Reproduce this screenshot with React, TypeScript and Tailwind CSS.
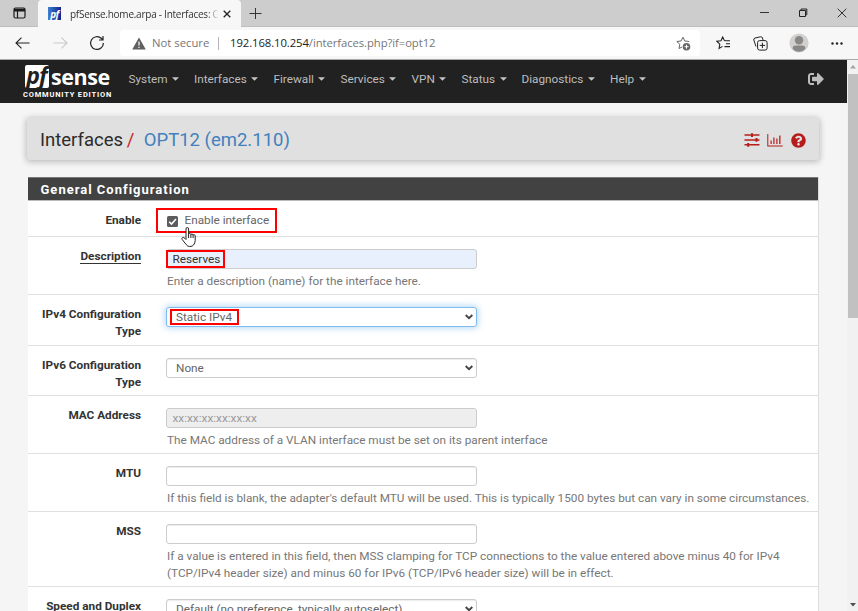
import type { ReactNode } from "react";
import { FaQuestionCircle, FaSignOutAlt } from "react-icons/fa";

const segoe = "font-['Open_Sans','Noto_Sans',sans-serif]";

function TabStrip() {
  return (
    <div className={`flex h-[27px] shrink-0 bg-[#cdcdcd] ${segoe}`}>
      <div className="flex w-[38px] items-center justify-center border-b border-[#bdbdbd]">
        <svg width="13" height="12" viewBox="0 0 13 12" fill="none" stroke="#1b1b1b" strokeWidth="1.2">
          <rect x="1" y="1" width="11" height="10" rx="1.5" />
          <path d="M1 2.5h11M1 3.6h11" strokeWidth="1.6" />
          <path d="M4.5 4v7" />
        </svg>
      </div>
      <div className="flex w-[203px] items-center rounded-t-[4px] bg-[#f7f7f7] pl-[10px]">
        <div className="flex size-[13px] items-center justify-center bg-linear-to-r from-[#3f7fd0] to-[#17208c] text-[10px] leading-none font-bold tracking-[-0.5px] text-white italic">
          pf
        </div>
        <div className="ml-[9px] w-[148px] overflow-hidden text-[10px] leading-[16px] tracking-[-0.250px] whitespace-nowrap text-[#333] [mask-image:linear-gradient(to_right,black_137px,transparent_149px)]">
          pfSense.home.arpa - Interfaces: O
        </div>
        <svg className="ml-[5px]" width="8" height="8" viewBox="0 0 8 8" stroke="#222" strokeWidth="1.3">
          <path d="M.7.7l6.6 6.6M7.3.7L.7 7.3" />
        </svg>
      </div>
      <div className="flex flex-1 items-center border-b border-[#bdbdbd] pl-[8px]">
        <svg width="13" height="13" viewBox="0 0 13 13" stroke="#333">
          <path d="M6.5 1v11M.5 6.5h12" />
        </svg>
        <svg className="ml-auto" width="10" height="10" viewBox="0 0 10 10" stroke="#333">
          <path d="M0 4.500h9" />
        </svg>
        <svg className="ml-[28px]" width="10" height="10" viewBox="0 0 10 10" fill="none" stroke="#222">
          <path d="M1.5 2.5h6v6h-6zM3 2.5V1h5.8v5.8H7.5" />
        </svg>
        <svg className="mr-[11px] ml-[29px]" width="10" height="10" viewBox="0 0 10 10" stroke="#333">
          <path d="M.7.7l8.6 8.6M9.3.7L.7 9.3" />
        </svg>
      </div>
    </div>
  );
}

function AddressBar() {
  return (
    <div className={`flex h-[33px] shrink-0 items-center border-b border-[#a9a9a9] bg-[#f7f7f7] ${segoe}`}>
      <svg className="ml-[15px]" width="15" height="12" viewBox="0 0 15 12" fill="none" stroke="#222" strokeWidth="1.1">
        <path d="M14.5 6H1M6.5.7L1 6l5.500 5.300" />
      </svg>
      <svg className="ml-[23px]" width="15" height="12" viewBox="0 0 15 12" fill="none" stroke="#c9c9c9" strokeWidth="1.1">
        <path d="M.5 6H14M8.500.7L14 6l-5.500 5.300" />
      </svg>
      <svg className="ml-[21px]" width="16" height="16" viewBox="0 0 16 16" fill="none" stroke="#222" strokeWidth="1.2">
        <path d="M14.400 8A6.400 6.400 0 1 1 12.300 3.300L14 4.900M14 1v4h-4" />
      </svg>
      <div className="ml-[15px] flex h-[26px] w-[580px] items-center rounded-[3px] bg-white text-[11.300px] leading-[18px] whitespace-nowrap text-[#767676]">
        <svg className="ml-[12px]" width="14" height="13" viewBox="0 0 14 13">
          <path d="M7 .4L13.800 12.600H.2z" fill="#5f5f5f" />
          <path d="M7 4.400v4.200M7 9.700v1.400" stroke="#fff" strokeWidth="1.2" />
        </svg>
        <span className="ml-[6px] w-[58px]">Not secure</span>
        <span className="ml-[8px] h-[13px] w-px bg-[#b5b5b5]" />
        <span className="ml-[11px] tracking-[-0.080px]">
          <span className="text-[#222]">192.168.10.254</span>/interfaces.php?if=opt12
        </span>
        <svg className="mr-[9px] ml-auto" width="15" height="15" viewBox="0 0 15 15" fill="none">
          <path
            d="M13.200 5.500L8.800 5 7 1.200 5 5 .8 5.500l3 2.800L3 12.500l3-1.500"
            stroke="#666"
          />
          <circle cx="10.500" cy="10.700" r="3.800" fill="#666" />
          <path d="M8.500 10.700h4M10.500 8.700v4" stroke="#fff" />
        </svg>
      </div>
      <svg className="ml-[16px]" width="15" height="14" viewBox="0 0 15 14" fill="none" stroke="#222" strokeWidth="1.1">
        <path d="M8.500 4.700L6.700 1 5 4.700l-4.200.5 3 3-.7 4.200 3.400-2M8.500 4.700H14M10 7.700h4M8.500 10.600H14" />
      </svg>
      <svg className="ml-[22px]" width="15" height="15" viewBox="0 0 15 15" fill="none" stroke="#222">
        <rect x="4.600" y="4.600" width="9.500" height="9.500" rx="2" />
        <path d="M9.400 6.700v5.400M6.700 9.400h5.400M3 10.500L.8 4Q.5 2.500 2 2L7.500.8Q9 .5 9.500 2L10 4" />
      </svg>
      <svg className="ml-[21px]" width="20" height="20" viewBox="0 0 20 20">
        <circle cx="10" cy="10" r="9.600" fill="#d2d0ce" />
        <circle cx="10" cy="7.200" r="4.200" fill="#8a8886" />
        <path d="M3.600 15.500Q3.600 12.500 7 12.500h6q3.400 0 3.400 3Q14 18.800 10 18.800T3.600 15.500" fill="#8a8886" />
      </svg>
      <svg className="ml-[22px]" width="12" height="3" viewBox="0 0 12 3" fill="#222">
        <circle cx="1.500" cy="1.500" r="1.200" />
        <circle cx="6" cy="1.500" r="1.200" />
        <circle cx="10.500" cy="1.500" r="1.200" />
      </svg>
    </div>
  );
}

function NavItem({ label, className }: { label: string; className: string }) {
  return (
    <div className={`flex shrink-0 items-center ${className}`}>
      <span>{label}</span>
      <svg className="ml-[4.500px]" width="7" height="4" viewBox="0 0 7 4" fill="#c4c4c4">
        <path d="M0 .3h7L3.500 3.700z" />
      </svg>
    </div>
  );
}

function NavBar() {
  return (
    <div className="flex h-[43px] shrink-0 items-center bg-[#212121] text-[11.780px] whitespace-nowrap text-[#bdbdbd]">
      <div className="ml-[23px] w-[105.500px] text-white">
        <div className="ml-[2px] flex h-[24px]">
          <div className="flex h-[23px] w-[24px] justify-center rounded-[2px] bg-white pr-px font-['Open_Sans',sans-serif] text-[23px] leading-[21px] font-bold tracking-[-1px] text-[#212121] italic">
            pf
          </div>
          <div className="ml-[2px] font-['Open_Sans',sans-serif] text-[21.500px] leading-[24px] font-bold tracking-[-0.400px]">
            sense
          </div>
        </div>
        <div className="mt-px text-[7.500px] leading-[9px] font-bold tracking-[0.810px]">COMMUNITY EDITION</div>
      </div>
      <div className="-mt-[4px] flex flex-1 items-center">
        <NavItem label="System" className="w-[65.500px]" />
        <NavItem label="Interfaces" className="w-[79.500px]" />
        <NavItem label="Firewall" className="w-[67px]" />
        <NavItem label="Services" className="w-[71px]" />
        <NavItem label="VPN" className="w-[50px]" />
        <NavItem label="Status" className="w-[60px]" />
        <NavItem label="Diagnostics" className="w-[88.500px]" />
        <NavItem label="Help" className="w-[40px]" />
        <FaSignOutAlt className="mr-[23px] ml-auto size-[16px]" />
      </div>
    </div>
  );
}

function TitleBar() {
  return (
    <div className="mt-[15px] ml-[27px] flex h-[42px] w-[792px] items-center rounded-[3px] bg-[#e0e0e0] pt-[2px] pr-[13.500px] pl-[13px] shadow-[0_1px_6px_1px_rgba(0,0,0,0.24)]">
      <div className="text-[18.500px] leading-[24px] whitespace-nowrap text-[#2b2b2b]">
        Interfaces <span className="-ml-px text-[#c62828]">/</span>
        <span className="ml-[9.500px] text-[#4281bd]">OPT12 (em2.110)</span>
      </div>
      <svg className="ml-auto" width="16" height="14" viewBox="0 0 16 14" fill="#b71c1c">
        <path d="M.5 1.300h15v1.500H.5zM.5 6.200h15v1.500H.5zM.5 11.100h15v1.500H.5zM7 .2h2v3.700H7zM11.500 5.100h2v3.700h-2zM3.200 10h2v3.700h-2z" />
      </svg>
      <svg className="ml-[7px]" width="16" height="13" viewBox="0 0 16 13" fill="#b71c1c">
        <path d="M.3 0h1v11.400h14.400v1H.3zM3.500 6.500h1.200v3.500H3.500zM6.300 3.500h1.200V10H6.300zM9.300 4.500h1.200V10H9.300zM12.200 1.500h1.300V10h-1.300z" />
      </svg>
      <FaQuestionCircle className="ml-[8px] size-[15px] text-[#b71c1c]" />
    </div>
  );
}

function Chevron() {
  return (
    <svg className="mr-[3px] ml-auto" width="8" height="6" viewBox="0 0 8 6" fill="none" stroke="#444" strokeWidth="1.900">
      <path d="M.7 1L4 4.200 7.300 1" />
    </svg>
  );
}

function Row({ label, height, children }: { label: ReactNode; height: string; children: ReactNode }) {
  return (
    <div className={`flex shrink-0 border-b border-[#e0e0e0] pt-[12px] ${height}`}>
      <div className="-mt-px w-[113px] shrink-0 text-right leading-[17px] font-bold text-[#333]">{label}</div>
      <div className="ml-[25px] flex-1">{children}</div>
    </div>
  );
}

function Field({ className, children }: { className?: string; children?: ReactNode }) {
  return (
    <div
      className={`flex h-[20px] w-[311px] items-center rounded-[3px] border whitespace-nowrap ${className ?? "border-[#ccc] bg-white shadow-[inset_0_1px_1px_rgba(0,0,0,0.075)]"}`}
    >
      {children}
    </div>
  );
}

function Help({ children }: { children: ReactNode }) {
  return <div className="mt-[4px] ml-px leading-[17px] whitespace-nowrap text-[#777]">{children}</div>;
}

function ConfigPanel() {
  return (
    <div className="mt-[17px] ml-[28px] flex w-[791px] flex-1 flex-col overflow-hidden border-r border-[#ddd] bg-white text-[11.780px] text-[#666]">
      <div className="flex h-[24px] shrink-0 items-center border-y border-t-[#777] border-b-[#bbb] bg-[#424242] pt-px pl-[12.500px] text-[13px] font-bold tracking-[1px] text-white">
        General Configuration
      </div>
      <Row label="Enable" height="h-[36px]">
        <div className="relative -mt-[5px] -ml-[10px] flex h-[25px] w-[121px] items-center border-2 border-[#f00] pl-[9px]">
          <svg className="mt-px" width="11" height="11" viewBox="0 0 11 11">
            <rect width="11" height="11" rx="1.500" fill="#5c5c5c" />
            <path d="M2.200 5.800l2.300 2.300 4.500-5.200" fill="none" stroke="#fff" strokeWidth="1.600" />
          </svg>
          <span className="ml-[6.500px] pt-px whitespace-nowrap">Enable interface</span>
          <svg className="absolute top-[17px] left-[23px] z-10" width="16" height="21" viewBox="0 0 16 21" fill="#fff" stroke="#222">
            <path d="M5 12.500V2q0-1.500 1.300-1.500T7.600 2v5q1-1.200 2.300.3 1.200-.9 2.200.5 1.800-.6 2.100 1v4.700q0 2.500-1.700 4.500-1 1.500-3.700 1.500-2.300 0-3.500-1.800L1.200 12.500q-.8-1.500.4-2 1.200-.4 2.400 1zM7.600 7v4M9.900 7.500v3.500M12.100 8v3" />
          </svg>
        </div>
      </Row>
      <Row label={<span className="border-b border-[#333]">Description</span>} height="h-[58px]">
        <Field className="border-[#ccc] bg-[#e8f0fe]">
          <div className="-ml-px flex h-[18px] w-[59px] items-center border-2 border-[#f00] pt-px pl-[4.500px] text-[#333]">Reserves</div>
        </Field>
        <Help>Enter a description (name) for the interface here.</Help>
      </Row>
      <Row label={<>IPv4 Configuration<br />Type</>} height="h-[51px]">
        <Field className="border-[#7fbdf0] bg-white shadow-[0_0_6px_1px_rgba(102,175,233,0.500)]">
          <div className="ml-[3px] -mt-px flex h-[16px] w-[69px] items-center border-2 border-[#f00] pt-[2px] pl-[4px]">Static IPv4</div>
          <Chevron />
        </Field>
      </Row>
      <Row label={<>IPv6 Configuration<br />Type</>} height="h-[50px]">
        <Field>
          <span className="ml-[9px] pt-px">None</span>
          <Chevron />
        </Field>
      </Row>
      <Row label="MAC Address" height="h-[58px]">
        <Field className="border-[#ccc] bg-[#eee] text-[#999]">
          <span className="ml-[5.500px] pt-px">xx:xx:xx:xx:xx:xx</span>
        </Field>
        <Help>The MAC address of a VLAN interface must be set on its parent interface</Help>
      </Row>
      <Row label="MTU" height="h-[58px]">
        <Field />
        <Help>If this field is blank, the adapter's default MTU will be used. This is typically 1500 bytes but can vary in some circumstances.</Help>
      </Row>
      <Row label="MSS" height="h-[75px]">
        <Field />
        <Help>
          If a value is entered in this field, then MSS clamping for TCP connections to the value entered above minus 40 for IPv4
          <br />
          (TCP/IPv4 header size) and minus 60 for IPv6 (TCP/IPv6 header size) will be in effect.
        </Help>
      </Row>
      <Row label="Speed and Duplex" height="h-[50px]">
        <Field>
          <span className="ml-[9px] pt-px">Default (no preference, typically autoselect)</span>
          <Chevron />
        </Field>
      </Row>
    </div>
  );
}

export default function App() {
  return (
    <div className="flex h-[611px] w-[858px] flex-col overflow-hidden bg-[#f5f5f5] font-['Roboto',sans-serif]">
      <TabStrip />
      <AddressBar />
      <div className="flex min-h-0 flex-1">
        <div className="flex w-[847px] flex-col overflow-hidden">
          <NavBar />
          <TitleBar />
          <ConfigPanel />
        </div>
        <div className="flex w-[11px] flex-col items-center bg-[#f1f1f1] pl-px">
          <svg className="mt-[5px]" width="6" height="4" viewBox="0 0 6 4" fill="#a3a3a3">
            <path d="M3 0l3 3.500H0z" />
          </svg>
          <div className="mt-[5px] h-[244px] w-[10px] bg-[#c1c1c1]" />
          <svg className="mt-auto mb-[4px]" width="6" height="4" viewBox="0 0 6 4" fill="#505050">
            <path d="M0 0h6L3 3.500z" />
          </svg>
        </div>
      </div>
    </div>
  );
}
